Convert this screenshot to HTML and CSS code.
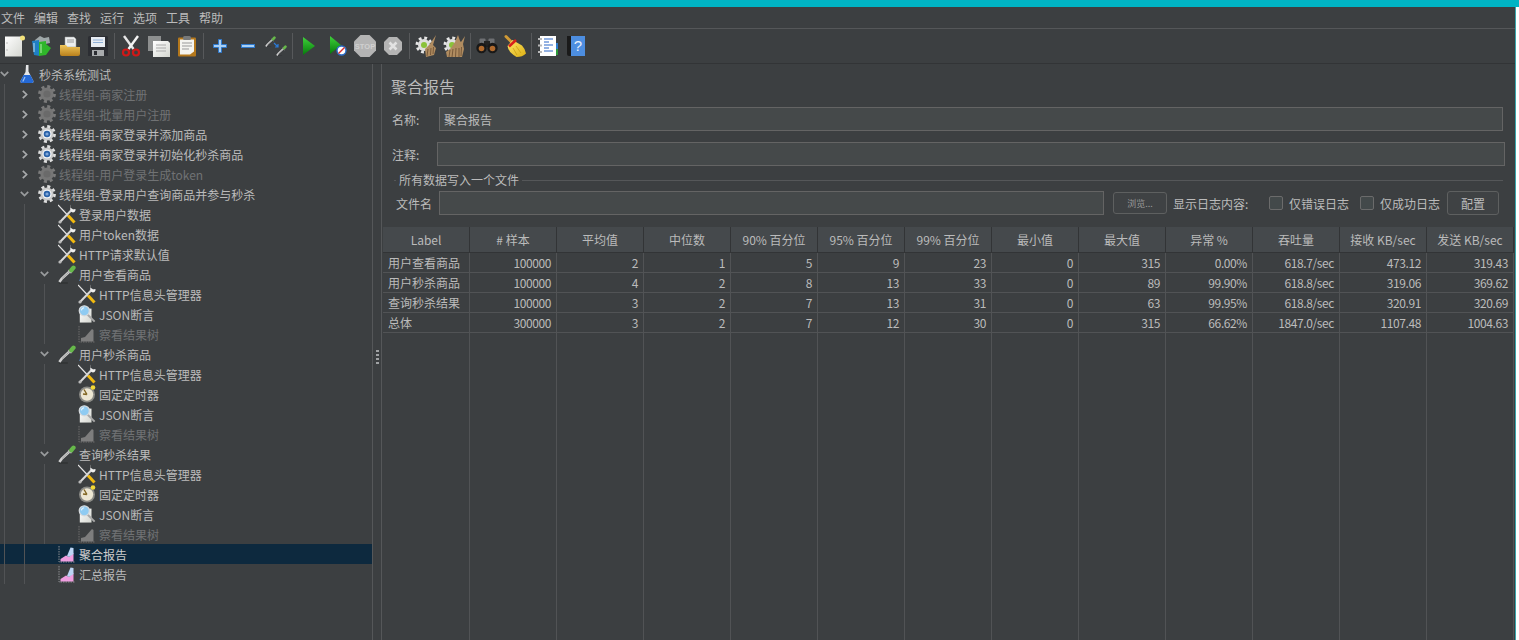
FILE: index.html
```html
<!DOCTYPE html>
<html lang="zh-CN">
<head>
<meta charset="UTF-8" />
<meta name="viewport" content="width=device-width, initial-scale=1" />
<title>Apache JMeter - 聚合报告</title>
<link rel="stylesheet" href="styles.css">
</head>
<body>

<!-- tree icons -->
<svg class="sprites" aria-hidden="true">
  <defs>
    <linearGradient id="gPage" x1="0" y1="0" x2="1" y2="1"><stop offset="0" stop-color="#fff"/><stop offset="1" stop-color="#d4d6d0"/></linearGradient>
    <linearGradient id="gGreen" x1="0" y1="0" x2="0" y2="1"><stop offset="0" stop-color="#3fd23a"/><stop offset="1" stop-color="#067a0c"/></linearGradient>
    <linearGradient id="gFolder" x1="0" y1="0" x2="0" y2="1"><stop offset="0" stop-color="#f0c65a"/><stop offset="1" stop-color="#b9801c"/></linearGradient>
    <linearGradient id="gBroom" x1="0" y1="0" x2="1" y2="1"><stop offset="0" stop-color="#ffe96a"/><stop offset="1" stop-color="#dcae12"/></linearGradient>
    <symbol id="i-chevron-down" viewBox="0 0 9 6"><path d="M.8 .8 4.5 4.6 8.2 .8" fill="none" stroke="#9a9c9e" stroke-width="1.7"/></symbol>
    <symbol id="i-chevron-right" viewBox="0 0 6 9"><path d="M.8 .8 4.6 4.5 .8 8.2" fill="none" stroke="#a8aaac" stroke-width="1.7"/></symbol>
    <symbol id="i-flask" viewBox="0 0 18 20">
      <path d="M8 1h2.5v6.5l4.8 9.3q.6 2.2-1.6 2.2H4.2q-2.2 0-1.6-2.2L7.5 8z" fill="#e4e6e8"/>
      <path d="M5.6 11h6.800l2.900 5.800q.6 2.200-1.600 2.200H4.200q-2.200 0-1.600-2.200z" fill="#2469d6"/>
      <path d="M7 13l-2.200 4.600" stroke="#9cc4f5" stroke-width="1.200"/>
    </symbol>
    <symbol id="i-gear" viewBox="0 0 18 18">
      <circle cx="9" cy="9" r="7.4" fill="none" stroke="#dedede" stroke-width="3" stroke-dasharray="3 2.81"/>
      <circle cx="9" cy="9" r="6.6" fill="#c9c9c9"/>
      <circle cx="9" cy="9" r="4.6" fill="#f4f4f4"/>
      <circle cx="9" cy="9" r="3.3" fill="#2a62a8"/>
      <circle cx="9" cy="9" r="1.6" fill="#7fa6d8"/>
    </symbol>
    <symbol id="i-gear-off" viewBox="0 0 18 18">
      <circle cx="9" cy="9" r="7.4" fill="none" stroke="#7b7b7b" stroke-width="3" stroke-dasharray="3 2.81"/>
      <circle cx="9" cy="9" r="6.6" fill="#767676"/>
      <circle cx="9" cy="9" r="3.6" fill="#6a6a6a"/>
    </symbol>
    <symbol id="i-tools" viewBox="0 0 18 20">
      <path d="M0 1 10 11.500" stroke="#e6e6e6" stroke-width="1.200"/>
      <path d="M10 11.500 16.500 18.500" stroke="#f2b90f" stroke-width="3"/>
      <path d="M14.500 5 2 18" stroke="#d8d8d8" stroke-width="2"/>
      <path d="M13 .5l-.5 3 2 2 3-.6q.3 3.100-2.800 3.500l-2-.8-.5-3q.2-3.800.8-4.100z" fill="#efefef"/>
      <circle cx="2" cy="18" r="1.600" fill="#b9b9b9"/>
    </symbol>
    <symbol id="i-dropper" viewBox="0 0 20 20">
      <path d="M1 20h10" stroke="#2e3031" stroke-width="1.400"/>
      <path d="M12.500 7.500 4 15.500 1.500 19" fill="none" stroke="#cfcfcf" stroke-width="2.800"/>
      <path d="M12 8 4.500 15" stroke="#8f8f8f" stroke-width=".8"/>
      <path d="M11.500 5.500l3.500 3.500" stroke="#aeb2ae" stroke-width="1.800"/>
      <path d="M14.800 5.800l2.400-2.800" stroke="#66b84a" stroke-width="4.800" stroke-linecap="round"/>
    </symbol>
    <symbol id="i-json" viewBox="0 0 20 20">
      <rect x="2" y="4" width="13" height="15.500" fill="url(#gPage)"/>
      <path d="M10.500 10.500 18.500 18.500" stroke="#a9a9a9" stroke-width="2.200"/>
      <circle cx="7" cy="6.500" r="5.600" fill="#8fcbf2" stroke="#d5d9dc" stroke-width="1.400"/>
      <path d="M3.800 6a3.400 3.400 0 0 1 3-3" fill="none" stroke="#e8f6ff" stroke-width="1.200"/>
    </symbol>
    <symbol id="i-graph-off" viewBox="0 0 18 18">
      <path d="M1 1v16h16" fill="none" stroke="#6d6d6d" stroke-dasharray="1.500 1"/>
      <path d="M3 16.500V13l4-1 7-8 1.500 1v11.500z" fill="#7d7d7d"/>
    </symbol>
    <symbol id="i-report" viewBox="0 0 18 18">
      <path d="M1 1v16h16" fill="none" stroke="#8a8d90" stroke-dasharray="1.500 1"/>
      <path d="M2.500 16.500V14L8 10.500l3 1.500 4.500-4v8.500z" fill="#ef9ee0"/>
      <path d="M9 11l3.500-8.500 3 .5v6l-4.500 3z" fill="#bcd5f5"/>
    </symbol>
    <symbol id="i-timer" viewBox="0 0 18 18">
      <circle cx="9" cy="9.500" r="8" fill="#8b8b86"/>
      <circle cx="9" cy="9.500" r="6.200" fill="#ece6d2"/>
      <path d="M9 9.500 6 4.500M9 9.500 5 9" stroke="#806420" stroke-width="1.400"/>
      <circle cx="15" cy="2.500" r="2.300" fill="#f3d835"/>
    </symbol>
    <symbol id="i-gear-sm" viewBox="0 0 22 22">
      <circle cx="9" cy="10" r="7" fill="none" stroke="#e6e6e6" stroke-width="3" stroke-dasharray="2.800 2.700"/>
      <circle cx="9" cy="10" r="6" fill="#dedede"/>
      <circle cx="9" cy="10" r="3" fill="#8ac23a"/>
    </symbol>
  </defs>
</svg>

<div class="top-strip"></div>

<div class="window">

  <nav class="menubar">
    <span>文件</span><span>编辑</span><span>查找</span><span>运行</span><span>选项</span><span>工具</span><span>帮助</span>
  </nav>

  <div class="toolbar">
    <button class="tool"><svg viewBox="0 0 22 22"><rect x="2" y="1.500" width="17" height="20" fill="url(#gPage)"/><circle cx="4" cy="8" r=".7" fill="#aaa"/><circle cx="4" cy="15" r=".7" fill="#aaa"/><circle cx="19.500" cy="3" r="2.500" fill="#f3e27a"/></svg></button>
    <button class="tool"><svg viewBox="0 0 22 22"><path d="M4 5l5-4 4 2 5-1 1 6-14 3z" fill="#9ea7a8"/><path d="M1 6l7-1 1 16-6-1z" fill="#1f7fc4"/><path d="M8 7l7-1v3l5 4-5 7-7 1z" fill="#2fb62a"/><path d="M3 8v9" stroke="#bfe0f5"/><path d="M10 9v9" stroke="#b7eeb0"/></svg></button>
    <button class="tool"><svg viewBox="0 0 22 22"><path d="M6 2h9l2 2v8H6z" fill="#eceff0" stroke="#9a9a9a" stroke-width=".5"/><path d="M8 5h7M8 7h7" stroke="#999"/><path d="M1 10h6l1.500 2H21v7q0 2-2 2H3q-2 0-2-2z" fill="url(#gFolder)"/></svg></button>
    <button class="tool"><svg viewBox="0 0 22 22"><path d="M2 1h18l1 1v19H1V2z" fill="#2c2e33"/><rect x="4" y="2" width="14" height="10" fill="#e8edf3"/><path d="M6 5h10M6 7.500h10" stroke="#8fb0d8"/><rect x="5" y="15" width="12" height="6" fill="#a9acae"/><rect x="7" y="16" width="3" height="4" fill="#2c2e33"/></svg></button>
    <i class="tool-sep"></i>
    <button class="tool"><svg viewBox="0 0 22 22"><path d="M4 1l9.500 13" stroke="#e6e6e6" stroke-width="2.400"/><path d="M18 1 8.500 14" stroke="#f4f4f4" stroke-width="2.400"/><circle cx="6" cy="17.500" r="3" fill="none" stroke="#d01818" stroke-width="2.200"/><circle cx="16" cy="17.500" r="3" fill="none" stroke="#d01818" stroke-width="2.200"/></svg></button>
    <button class="tool"><svg viewBox="0 0 22 22"><rect x="0" y="1" width="13" height="15" fill="#8d8f8f"/><path d="M5 6h15l2 2v14H5z" fill="url(#gPage)"/><path d="M8 10h10M8 13h10M8 16h10" stroke="#aaa"/></svg></button>
    <button class="tool"><svg viewBox="0 0 22 22"><rect x="2" y="2.500" width="18" height="19" rx="1" fill="#b4781c"/><path d="M4 4.500h14v12l-4 3H4z" fill="#f4f4f0"/><rect x="7" y="1" width="8" height="4" rx="1.500" fill="#77797a"/><path d="M6 8h10M6 11h10M6 14h7" stroke="#999"/></svg></button>
    <i class="tool-sep"></i>
    <button class="tool"><svg viewBox="0 0 22 22"><path d="M9.500 4.500h3v5h5v3h-5v5h-3v-5h-5v-3h5z" fill="#a8d0f5" stroke="#2f79cc"/></svg></button>
    <button class="tool"><svg viewBox="0 0 22 22"><rect x="4.500" y="9.500" width="13" height="3" fill="#a8d0f5" stroke="#2f79cc"/></svg></button>
    <button class="tool"><svg viewBox="0 0 22 22"><use href="#i-dropper" x="0" y="1" width="11" height="11"/><use href="#i-dropper" x="11" y="10" width="11" height="11"/><path d="M9 8l4 4m0-3v3h-3" fill="none" stroke="#2b7ad6" stroke-width="1.200"/></svg></button>
    <i class="tool-sep"></i>
    <button class="tool"><svg viewBox="0 0 22 22"><path d="M5 2 17 11 5 20z" fill="url(#gGreen)"/></svg></button>
    <button class="tool"><svg viewBox="0 0 22 22"><path d="M4 1 15 10 4 19z" fill="url(#gGreen)"/><circle cx="15.500" cy="15.500" r="4.500" fill="#fff" stroke="#2a6cc8" stroke-width="1.400"/><path d="M12.500 18.500l6-6" stroke="#d83030" stroke-width="1.400"/></svg></button>
    <button class="tool"><svg viewBox="0 0 22 22"><path d="M6.500 0h9L22 6.500v9L15.500 22h-9L0 15.500v-9z" fill="#b4b4b4"/><text x="11" y="14" class="stop-text">STOP</text></svg></button>
    <button class="tool"><svg viewBox="0 0 22 22"><path d="M7 2h8l5 5v8l-5 5H7l-5-5V7z" fill="#b4b4b4"/><path d="M7.500 7.500l7 7m0-7-7 7" stroke="#e2e2e2" stroke-width="2.600"/></svg></button>
    <i class="tool-sep"></i>
    <button class="tool"><svg viewBox="0 0 22 22"><use href="#i-gear-sm" width="22" height="22"/><path d="M21 0 15 9l-5 5 1 8 8-2 2-7-3-3z" fill="#b08c60"/><path d="M13 14l-1 7M16 13l-.5 7M18.500 12l-.5 7" stroke="#77593a"/></svg></button>
    <button class="tool"><svg viewBox="0 0 22 22"><use href="#i-gear-sm" width="22" height="22"/><path d="M15 0 12 7l-4 6-5 4 1 5h15l2-8-1-5 2-8-4 6-1-1z" fill="#b08c60"/><path d="M7 15l-1 7M10 14l-1 8M13 13l-.5 9M16 13v9M18.500 12l-.5 9" stroke="#77593a"/></svg></button>
    <i class="tool-sep"></i>
    <button class="tool"><svg viewBox="0 0 22 22"><rect x="3.500" y="3.500" width="6" height="6" rx="1" fill="#6d6f72"/><rect x="12.500" y="3.500" width="6" height="6" rx="1" fill="#6d6f72"/><rect x="8" y="6" width="6" height="6" fill="#222"/><circle cx="5.500" cy="13" r="5.200" fill="#181818"/><circle cx="16.500" cy="13" r="5.200" fill="#181818"/><circle cx="5.500" cy="13.500" r="2.800" fill="#b06a2e"/><circle cx="16.500" cy="13.500" r="2.800" fill="#b06a2e"/></svg></button>
    <button class="tool"><svg viewBox="0 0 22 22"><path d="M2 1.500l5.500 5.500" stroke="#d09a35" stroke-width="3" stroke-linecap="round"/><path d="M8.500 5 3.500 11q1 6 6 9l3 2q6 0 9.500-3.500-1-5-4-8z" fill="url(#gBroom)"/><path d="M5 11.500l7-6.500" stroke="#d8201c" stroke-width="2.600"/><path d="M9 13l4 7M12 11l5 7" stroke="#c99b10" stroke-width=".7"/></svg></button>
    <i class="tool-sep"></i>
    <button class="tool"><svg viewBox="0 0 22 22"><rect x="17" y="8" width="4" height="6" fill="#2f7ccc"/><rect x="17" y="14" width="4" height="6" fill="#2c9a3a"/><rect x="3" y="1" width="16" height="20" fill="#fff"/><path d="M1 4h4M1 10.500h4M1 17h4" stroke="#b9b9b9" stroke-width="2"/><path d="M7 4h9M7 7h5M7 10h9M7 13h5M7 16h9" stroke="#2b66c8" stroke-width="1.200"/></svg></button>
    <button class="tool"><svg viewBox="0 0 22 22"><path d="M2 1h4v20H4q-2 0-2-2z" fill="#1a1a1a"/><rect x="6" y="1" width="14" height="20" fill="#4d8ee0"/><text x="13" y="16" class="help-text">?</text></svg></button>
  </div>

  <div class="main">

    <aside class="tree-pane">
      <div class="row"><b class="tw"><svg class="chev-d"><use href="#i-chevron-down"/></svg></b><svg class="ico"><use href="#i-flask"/></svg>秒杀系统测试</div>

      <div class="row off"><i class="g"></i><b class="tw"><svg class="chev-r"><use href="#i-chevron-right"/></svg></b><svg class="ico"><use href="#i-gear-off"/></svg>线程组-商家注册</div>
      <div class="row off"><i class="g"></i><b class="tw"><svg class="chev-r"><use href="#i-chevron-right"/></svg></b><svg class="ico"><use href="#i-gear-off"/></svg>线程组-批量用户注册</div>
      <div class="row"><i class="g"></i><b class="tw"><svg class="chev-r"><use href="#i-chevron-right"/></svg></b><svg class="ico"><use href="#i-gear"/></svg>线程组-商家登录并添加商品</div>
      <div class="row"><i class="g"></i><b class="tw"><svg class="chev-r"><use href="#i-chevron-right"/></svg></b><svg class="ico"><use href="#i-gear"/></svg>线程组-商家登录并初始化秒杀商品</div>
      <div class="row off"><i class="g"></i><b class="tw"><svg class="chev-r"><use href="#i-chevron-right"/></svg></b><svg class="ico"><use href="#i-gear-off"/></svg>线程组-用户登录生成token</div>
      <div class="row"><i class="g"></i><b class="tw"><svg class="chev-d"><use href="#i-chevron-down"/></svg></b><svg class="ico"><use href="#i-gear"/></svg>线程组-登录用户查询商品并参与秒杀</div>

      <div class="row"><i class="g"></i><i class="g"></i><b class="tw"></b><svg class="ico"><use href="#i-tools"/></svg>登录用户数据</div>
      <div class="row"><i class="g"></i><i class="g"></i><b class="tw"></b><svg class="ico"><use href="#i-tools"/></svg>用户token数据</div>
      <div class="row"><i class="g"></i><i class="g"></i><b class="tw"></b><svg class="ico"><use href="#i-tools"/></svg>HTTP请求默认值</div>

      <div class="row"><i class="g"></i><i class="g"></i><b class="tw"><svg class="chev-d"><use href="#i-chevron-down"/></svg></b><svg class="ico"><use href="#i-dropper"/></svg>用户查看商品</div>
      <div class="row"><i class="g"></i><i class="g"></i><i class="g"></i><b class="tw"></b><svg class="ico"><use href="#i-tools"/></svg>HTTP信息头管理器</div>
      <div class="row"><i class="g"></i><i class="g"></i><i class="g"></i><b class="tw"></b><svg class="ico"><use href="#i-json"/></svg>JSON断言</div>
      <div class="row off"><i class="g"></i><i class="g"></i><i class="g"></i><b class="tw"></b><svg class="ico"><use href="#i-graph-off"/></svg>察看结果树</div>

      <div class="row"><i class="g"></i><i class="g"></i><b class="tw"><svg class="chev-d"><use href="#i-chevron-down"/></svg></b><svg class="ico"><use href="#i-dropper"/></svg>用户秒杀商品</div>
      <div class="row"><i class="g"></i><i class="g"></i><i class="g"></i><b class="tw"></b><svg class="ico"><use href="#i-tools"/></svg>HTTP信息头管理器</div>
      <div class="row"><i class="g"></i><i class="g"></i><i class="g"></i><b class="tw"></b><svg class="ico"><use href="#i-timer"/></svg>固定定时器</div>
      <div class="row"><i class="g"></i><i class="g"></i><i class="g"></i><b class="tw"></b><svg class="ico"><use href="#i-json"/></svg>JSON断言</div>
      <div class="row off"><i class="g"></i><i class="g"></i><i class="g"></i><b class="tw"></b><svg class="ico"><use href="#i-graph-off"/></svg>察看结果树</div>

      <div class="row"><i class="g"></i><i class="g"></i><b class="tw"><svg class="chev-d"><use href="#i-chevron-down"/></svg></b><svg class="ico"><use href="#i-dropper"/></svg>查询秒杀结果</div>
      <div class="row"><i class="g"></i><i class="g"></i><i class="g"></i><b class="tw"></b><svg class="ico"><use href="#i-tools"/></svg>HTTP信息头管理器</div>
      <div class="row"><i class="g"></i><i class="g"></i><i class="g"></i><b class="tw"></b><svg class="ico"><use href="#i-timer"/></svg>固定定时器</div>
      <div class="row"><i class="g"></i><i class="g"></i><i class="g"></i><b class="tw"></b><svg class="ico"><use href="#i-json"/></svg>JSON断言</div>
      <div class="row off"><i class="g"></i><i class="g"></i><i class="g"></i><b class="tw"></b><svg class="ico"><use href="#i-graph-off"/></svg>察看结果树</div>

      <div class="row selected"><i class="g"></i><i class="g"></i><b class="tw"></b><svg class="ico"><use href="#i-report"/></svg>聚合报告</div>
      <div class="row"><i class="g"></i><i class="g"></i><b class="tw"></b><svg class="ico"><use href="#i-report"/></svg>汇总报告</div>
    </aside>

    <div class="divider"><span class="grip"></span></div>

    <section class="content">
      <h1 class="panel-title">聚合报告</h1>

      <div class="field name-field">
        <label>名称:</label>
        <input class="text-input" value="聚合报告">
      </div>
      <div class="field comment-field">
        <label>注释:</label>
        <input class="text-input">
      </div>

      <fieldset class="file-group">
        <legend>所有数据写入一个文件</legend>
        <div class="file-row">
          <label class="file-label">文件名</label>
          <input class="text-input">
          <button class="btn browse">浏览...</button>
          <span class="log-label">显示日志内容:</span>
          <label class="check first"><input type="checkbox">仅错误日志</label>
          <label class="check"><input type="checkbox">仅成功日志</label>
          <button class="btn config">配置</button>
        </div>
      </fieldset>

      <div class="table-wrap">
        <table class="results">
          <thead>
            <tr><th>Label</th><th># 样本</th><th>平均值</th><th>中位数</th><th>90% 百分位</th><th>95% 百分位</th><th>99% 百分位</th><th>最小值</th><th>最大值</th><th>异常 %</th><th>吞吐量</th><th>接收 KB/sec</th><th>发送 KB/sec</th></tr>
          </thead>
          <tbody>
            <tr><td>用户查看商品</td><td>100000</td><td>2</td><td>1</td><td>5</td><td>9</td><td>23</td><td>0</td><td>315</td><td>0.00%</td><td>618.7/sec</td><td>473.12</td><td>319.43</td></tr>
            <tr><td>用户秒杀商品</td><td>100000</td><td>4</td><td>2</td><td>8</td><td>13</td><td>33</td><td>0</td><td>89</td><td>99.90%</td><td>618.8/sec</td><td>319.06</td><td>369.62</td></tr>
            <tr><td>查询秒杀结果</td><td>100000</td><td>3</td><td>2</td><td>7</td><td>13</td><td>31</td><td>0</td><td>63</td><td>99.95%</td><td>618.8/sec</td><td>320.91</td><td>320.69</td></tr>
            <tr><td>总体</td><td>300000</td><td>3</td><td>2</td><td>7</td><td>12</td><td>30</td><td>0</td><td>315</td><td>66.62%</td><td>1847.0/sec</td><td>1107.48</td><td>1004.63</td></tr>
          </tbody>
        </table>
      </div>
    </section>

  </div>
</div>

</body>
</html>
```

FILE: styles.css
```css
* {
  box-sizing: border-box;
}
html, body {
  margin: 0;
  height: 100%;
  overflow: hidden;
}
body {
  background: #fff;
  color: #bbb;
  font-family: "Noto Sans CJK SC", "Noto Sans", sans-serif;
  font-size: 12px;
}
.sprites {
  position: absolute;
  width: 0;
  height: 0;
}
.top-strip {
  height: 7px;
  background: #00b4c4;
}
.window {
  width: 1516px;
  height: 633px;
  display: flex;
  flex-direction: column;
  background: #3c3f41;
  border-right: 1px solid #3aa6ac;
}

/* menu + toolbar */
.menubar {
  height: 22px;
  display: flex;
  align-items: center;
  gap: 9px;
  padding-left: 1px;
  border-bottom: 1px solid #555759;
  line-height: 21px;
}
.toolbar {
  height: 35px;
  display: flex;
  align-items: center;
  border-bottom: 1px solid #323436;
}
.tool {
  width: 28px;
  height: 34px;
  padding: 0;
  border: none;
  background: none;
  display: flex;
  align-items: center;
  justify-content: center;
}
.tool svg {
  width: 22px;
  height: 22px;
  overflow: visible;
}
.tool-sep {
  width: 1px;
  height: 26px;
  margin: 0 2px;
  background: #57595b;
}
.stop-text {
  font-family: "Liberation Sans", sans-serif;
  font-size: 7.5px;
  font-weight: 700;
  text-anchor: middle;
  fill: #d0d0d0;
}
.help-text {
  font-family: "Liberation Sans", sans-serif;
  font-size: 15px;
  text-anchor: middle;
  fill: #e8f0fa;
}

.main {
  flex: 1;
  min-height: 0;
  display: flex;
}

/* left tree */
.tree-pane {
  width: 373px;
  border-right: 1px solid #555759;
  flex: none;
}
.row {
  height: 20px;
  display: flex;
  align-items: center;
  white-space: nowrap;
}
.row.off {
  color: #707274;
}
.row.selected {
  background: #0d293e;
  color: #ccc;
}
.g {
  width: 20px;
  height: 20px;
  flex: none;
  background: linear-gradient(#515355, #515355) 4px 0 / 1px 100% no-repeat;
}
.tw {
  width: 18px;
  height: 20px;
  flex: none;
  display: flex;
  align-items: center;
}
.chev-d {
  width: 9px;
  height: 6px;
}
.chev-r {
  width: 6px;
  height: 9px;
  margin-left: 2px;
}
.ico {
  width: 18px;
  height: 20px;
  margin-right: 3px;
  flex: none;
}

.divider {
  width: 9px;
  flex: none;
  display: flex;
  align-items: center;
  justify-content: center;
  border-right: 1px solid #555759;
}
.grip {
  width: 3px;
  height: 14px;
  margin-top: 9px;
  background: repeating-linear-gradient(#a0a2a4 0 2px, transparent 2px 4px);
}

/* right panel */
.content {
  flex: 1;
  min-width: 0;
  display: flex;
  flex-direction: column;
}
.panel-title {
  margin: 11px 0 10px 9px;
  font-size: 16px;
  font-weight: 400;
  line-height: 22px;
}
.field {
  display: flex;
  align-items: center;
  padding-left: 10px;
}
.field label {
  width: 47px;
}
.name-field {
  padding-right: 12px;
}
.comment-field {
  margin-top: 11px;
  padding-right: 10px;
}
.comment-field label {
  width: 45px;
}
.text-input {
  flex: 1;
  min-width: 0;
  height: 24px;
  padding: 0 4px;
  background: #45494a;
  border: 1px solid #646464;
  color: #bbb;
  font: inherit;
  outline: none;
}
.file-group {
  margin: 6px 12px 0;
  padding: 3px 4px 0 2px;
  min-width: 0;
  border: none;
  border-top: 1px solid #555759;
}
.file-group legend {
  margin-left: 0;
  padding: 0 3px;
  line-height: 16px;
}
.file-row {
  display: flex;
  align-items: center;
  height: 24px;
}
.file-label {
  width: 43px;
  flex: none;
}
.btn {
  flex: none;
  padding: 0;
  background: #3f4244;
  border: 1px solid #5e6060;
  border-radius: 3px;
  color: #bbb;
  font: inherit;
}
.browse {
  width: 54px;
  height: 22px;
  margin-left: 9px;
  color: #999;
  font-size: 9px;
}
.log-label {
  margin-left: 6px;
  flex: none;
  width: 96px;
}
.check {
  display: flex;
  align-items: center;
  gap: 6px;
  flex: none;
  margin-left: 11px;
}
.check.first {
  margin-left: 0;
}
.check input {
  appearance: none;
  width: 14px;
  height: 14px;
  margin: 0;
  background: #43494a;
  border: 1px solid #6b6b6b;
  border-radius: 2px;
}
.config {
  width: 52px;
  height: 24px;
  margin-left: 7px;
}

/* results table */
.table-wrap {
  flex: 1;
  margin: 12px 0 0 1px;
  background: repeating-linear-gradient(90deg, transparent 0 86px, #515355 86px 87px) 0 0 / 1131px 100% no-repeat;
}
.results {
  width: 1131px;
  table-layout: fixed;
  border-collapse: separate;
  border-spacing: 0;
  background: #3c3f41;
}
.results th {
  height: 26px;
  padding: 0;
  background: #45494c;
  font-weight: 400;
  text-align: center;
  border-right: 1px solid #323436;
  border-bottom: 1px solid #323436;
  white-space: nowrap;
}
.results td {
  height: 20px;
  padding: 0 5px;
  line-height: 19px;
  text-align: right;
  letter-spacing: -.4px;
  border-right: 1px solid #515355;
  border-bottom: 1px solid #515355;
  white-space: nowrap;
}
.results td:first-child {
  text-align: left;
  letter-spacing: 0;
}
```
